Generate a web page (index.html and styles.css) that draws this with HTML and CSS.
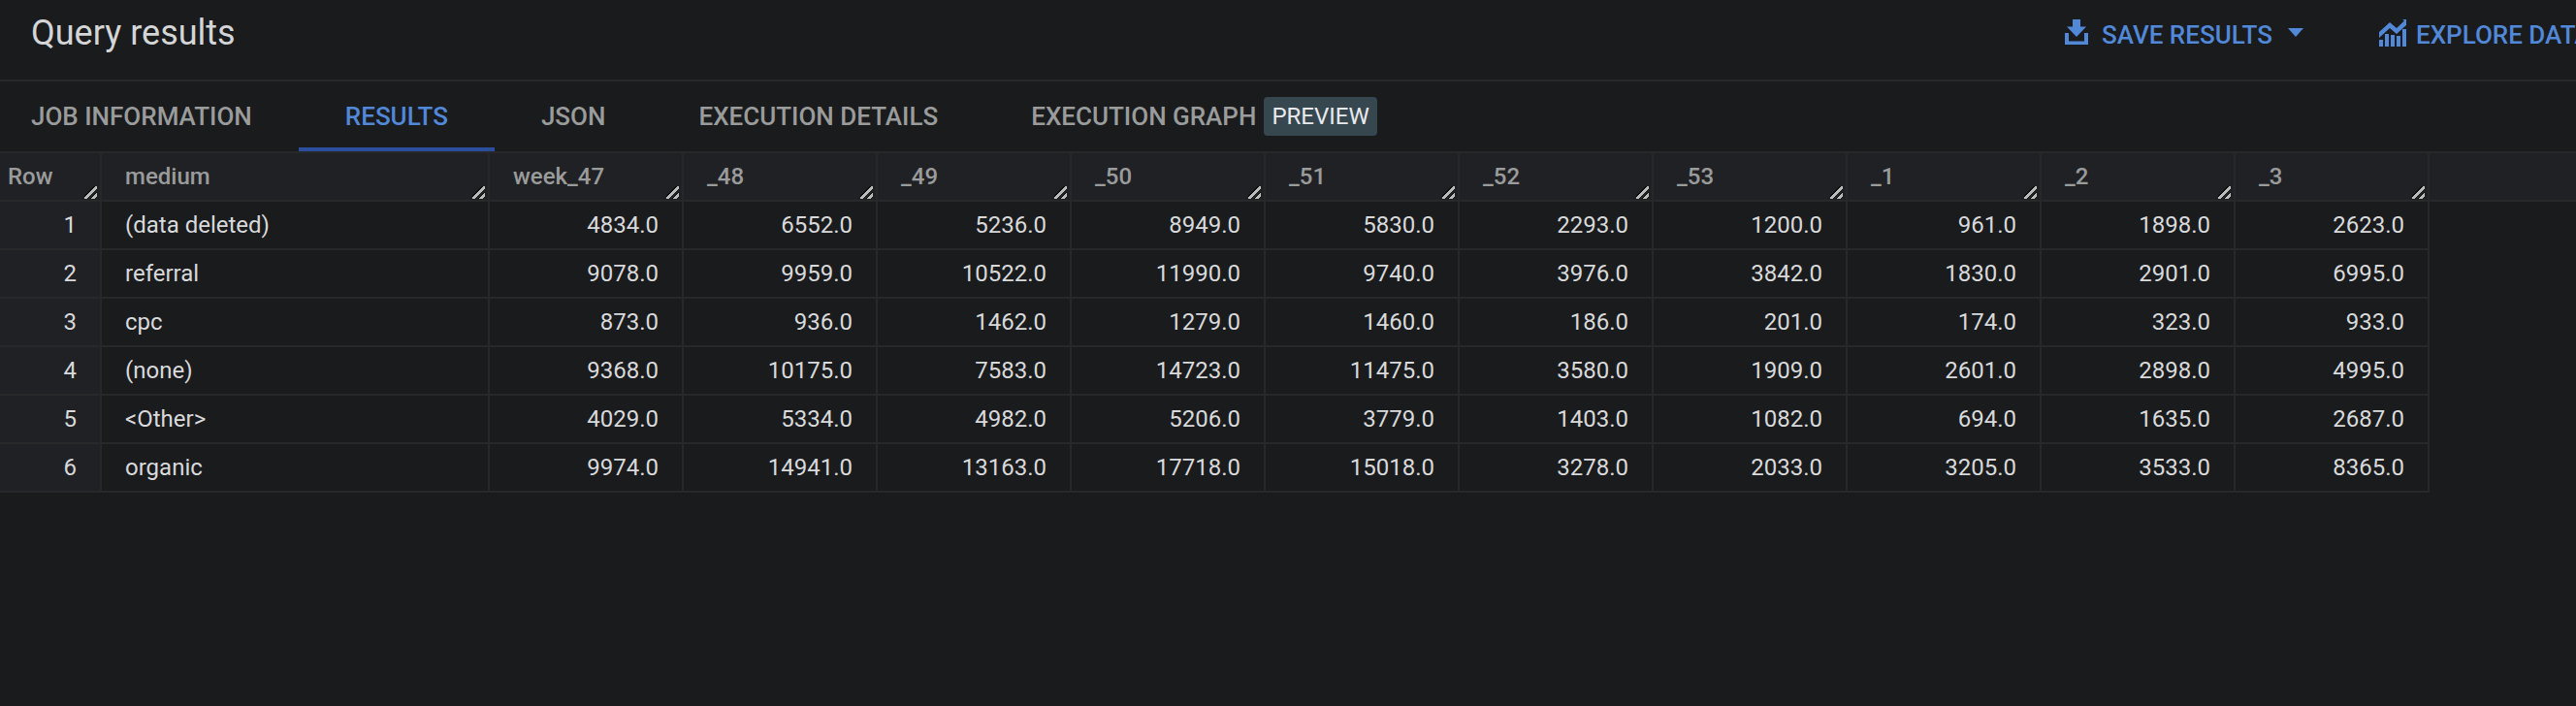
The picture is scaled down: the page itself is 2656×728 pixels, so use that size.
FILE: index.html
```html
<!DOCTYPE html>
<html lang="en">
<head>
    <meta charset="UTF-8">
    <title>Query results</title>
    <link rel="stylesheet" href="styles.css">
</head>
<body>
    <header class="results-header">
        <h1 class="results-title">Query results</h1>
        <button class="header-button save-button">
            <svg class="save-icon" viewBox="0 0 24 26" fill="currentColor"><path d="M8 0h8v7.500h6L12 18 2 7.500h6z"/><path d="M0 14h4v8.500h16V14h4v12H0z"/></svg>
            SAVE RESULTS
            <span class="caret"></span>
        </button>
        <button class="header-button explore-button">
            <svg class="explore-icon" viewBox="0 0 28 28" fill="currentColor"><path d="M0 13 11 3l7 6L26 1.500 24 0h4v6L18 15l-7-6L0 19z"/><path d="M0 21h4v7H0zM6 15h4v13H6zM12 16h4v12h-4zM18 17h4v11h-4zM24 10h4v18h-4z"/></svg>
            EXPLORE DATA
        </button>
    </header>

    <nav class="tabs">
        <a class="tab">JOB INFORMATION</a>
        <a class="tab active">RESULTS</a>
        <a class="tab">JSON</a>
        <a class="tab">EXECUTION DETAILS</a>
        <a class="tab">EXECUTION GRAPH <span class="preview-chip">PREVIEW</span></a>
    </nav>

    <table class="results-table">
        <thead>
            <tr>
                <th class="row-col">Row<i class="resize"></i></th>
                <th class="medium-col">medium<i class="resize"></i></th>
                <th>week_47<i class="resize"></i></th>
                <th>_48<i class="resize"></i></th>
                <th>_49<i class="resize"></i></th>
                <th>_50<i class="resize"></i></th>
                <th>_51<i class="resize"></i></th>
                <th>_52<i class="resize"></i></th>
                <th>_53<i class="resize"></i></th>
                <th>_1<i class="resize"></i></th>
                <th>_2<i class="resize"></i></th>
                <th>_3<i class="resize"></i></th>
                <th class="filler"></th>
            </tr>
        </thead>
        <tbody>
            <tr>
                <td class="row-col">1</td><td class="medium-col">(data deleted)</td>
                <td>4834.0</td><td>6552.0</td><td>5236.0</td><td>8949.0</td><td>5830.0</td><td>2293.0</td><td>1200.0</td><td>961.0</td><td>1898.0</td><td>2623.0</td>
            </tr>
            <tr>
                <td class="row-col">2</td><td class="medium-col">referral</td>
                <td>9078.0</td><td>9959.0</td><td>10522.0</td><td>11990.0</td><td>9740.0</td><td>3976.0</td><td>3842.0</td><td>1830.0</td><td>2901.0</td><td>6995.0</td>
            </tr>
            <tr>
                <td class="row-col">3</td><td class="medium-col">cpc</td>
                <td>873.0</td><td>936.0</td><td>1462.0</td><td>1279.0</td><td>1460.0</td><td>186.0</td><td>201.0</td><td>174.0</td><td>323.0</td><td>933.0</td>
            </tr>
            <tr>
                <td class="row-col">4</td><td class="medium-col">(none)</td>
                <td>9368.0</td><td>10175.0</td><td>7583.0</td><td>14723.0</td><td>11475.0</td><td>3580.0</td><td>1909.0</td><td>2601.0</td><td>2898.0</td><td>4995.0</td>
            </tr>
            <tr>
                <td class="row-col">5</td><td class="medium-col">&lt;Other&gt;</td>
                <td>4029.0</td><td>5334.0</td><td>4982.0</td><td>5206.0</td><td>3779.0</td><td>1403.0</td><td>1082.0</td><td>694.0</td><td>1635.0</td><td>2687.0</td>
            </tr>
            <tr>
                <td class="row-col">6</td><td class="medium-col">organic</td>
                <td>9974.0</td><td>14941.0</td><td>13163.0</td><td>17718.0</td><td>15018.0</td><td>3278.0</td><td>2033.0</td><td>3205.0</td><td>3533.0</td><td>8365.0</td>
            </tr>
        </tbody>
    </table>
</body>
</html>
```

FILE: styles.css
```css
* {
    margin: 0;
    padding: 0;
    box-sizing: border-box;
}

html,
body {
    height: 100%;
}

body {
    font-family: Roboto, "Liberation Sans", sans-serif;
    background: #1a1b1d;
    color: #e8eaed;
    overflow: hidden;
}

.results-header {
    display: flex;
    align-items: center;
    width: 2800px;
    height: 84px;
    padding: 0 0 14px 32px;
    border-bottom: 2px solid #27282a;
}

.results-title {
    width: 2097px;
    font-size: 36px;
    font-weight: 400;
    color: #d4d5d6;
}

.header-button {
    display: flex;
    align-items: center;
    padding-top: 3px;
    border: none;
    background: none;
    font-family: inherit;
    font-size: 26px;
    font-weight: 500;
    white-space: nowrap;
    color: #5288d8;
}

.save-icon {
    width: 24px;
    height: 26px;
    margin-right: 14px;
    margin-bottom: 5px;
}

.explore-icon {
    width: 28px;
    height: 28px;
    margin-right: 10px;
    margin-bottom: 3px;
}

.save-button {
    width: 324px;
}

.caret {
    width: 0;
    height: 0;
    margin-left: 16px;
    margin-bottom: 4px;
    border-left: 8px solid transparent;
    border-right: 8px solid transparent;
    border-top: 9px solid #5288d8;
}

.tabs {
    display: flex;
    height: 72px;
}

.tab {
    display: flex;
    align-items: center;
    gap: 8px;
    padding: 0 48px;
    font-size: 26px;
    font-weight: 500;
    color: #9a9b9b;
}

.tab:first-child {
    padding-left: 32px;
}

.tab.active {
    color: #5288d8;
    border-bottom: 4px solid #2b4f9e;
    padding-top: 4px;
}

.preview-chip {
    padding: 6px 8px;
    border-radius: 4px;
    background: #37474f;
    font-size: 24px;
    font-weight: 400;
    color: #e8eaed;
}

.results-table {
    border-collapse: separate;
    border-spacing: 0;
    table-layout: fixed;
    width: 2656px;
    font-size: 24px;
}

.results-table th,
.results-table td {
    width: 200px;
    border-right: 2px solid #27282a;
    border-bottom: 2px solid #27282a;
}

.results-table th {
    position: relative;
    height: 52px;
    padding: 0 24px;
    border-top: 2px solid #27282a;
    background: #202124;
    font-weight: 500;
    text-align: left;
    color: #9a9b9b;
}

.results-table td {
    height: 50px;
    padding: 0 24px;
    text-align: right;
    color: #d8d9da;
}

.results-table .row-col {
    width: 105px;
    background: #202124;
}

.results-table th.row-col {
    padding-left: 8px;
    padding-right: 0;
}

.results-table .medium-col {
    width: 400px;
    text-align: left;
}

/* empty header space right of the last column */
.results-table th.filler {
    width: auto;
    border-right: none;
}

/* column resize grip, long stripe and short stripe */
.resize {
    position: absolute;
    right: 3px;
    bottom: 1px;
    width: 13px;
    height: 13px;
    background: linear-gradient(135deg,
        transparent 37%, #0c0c0d 37%, #0c0c0d 43%, #bcbcbc 43%, #bcbcbc 58%,
        transparent 58%, transparent 70%, #0c0c0d 70%, #0c0c0d 75%, #bcbcbc 75%, #bcbcbc 89%,
        transparent 89%);
}
```
